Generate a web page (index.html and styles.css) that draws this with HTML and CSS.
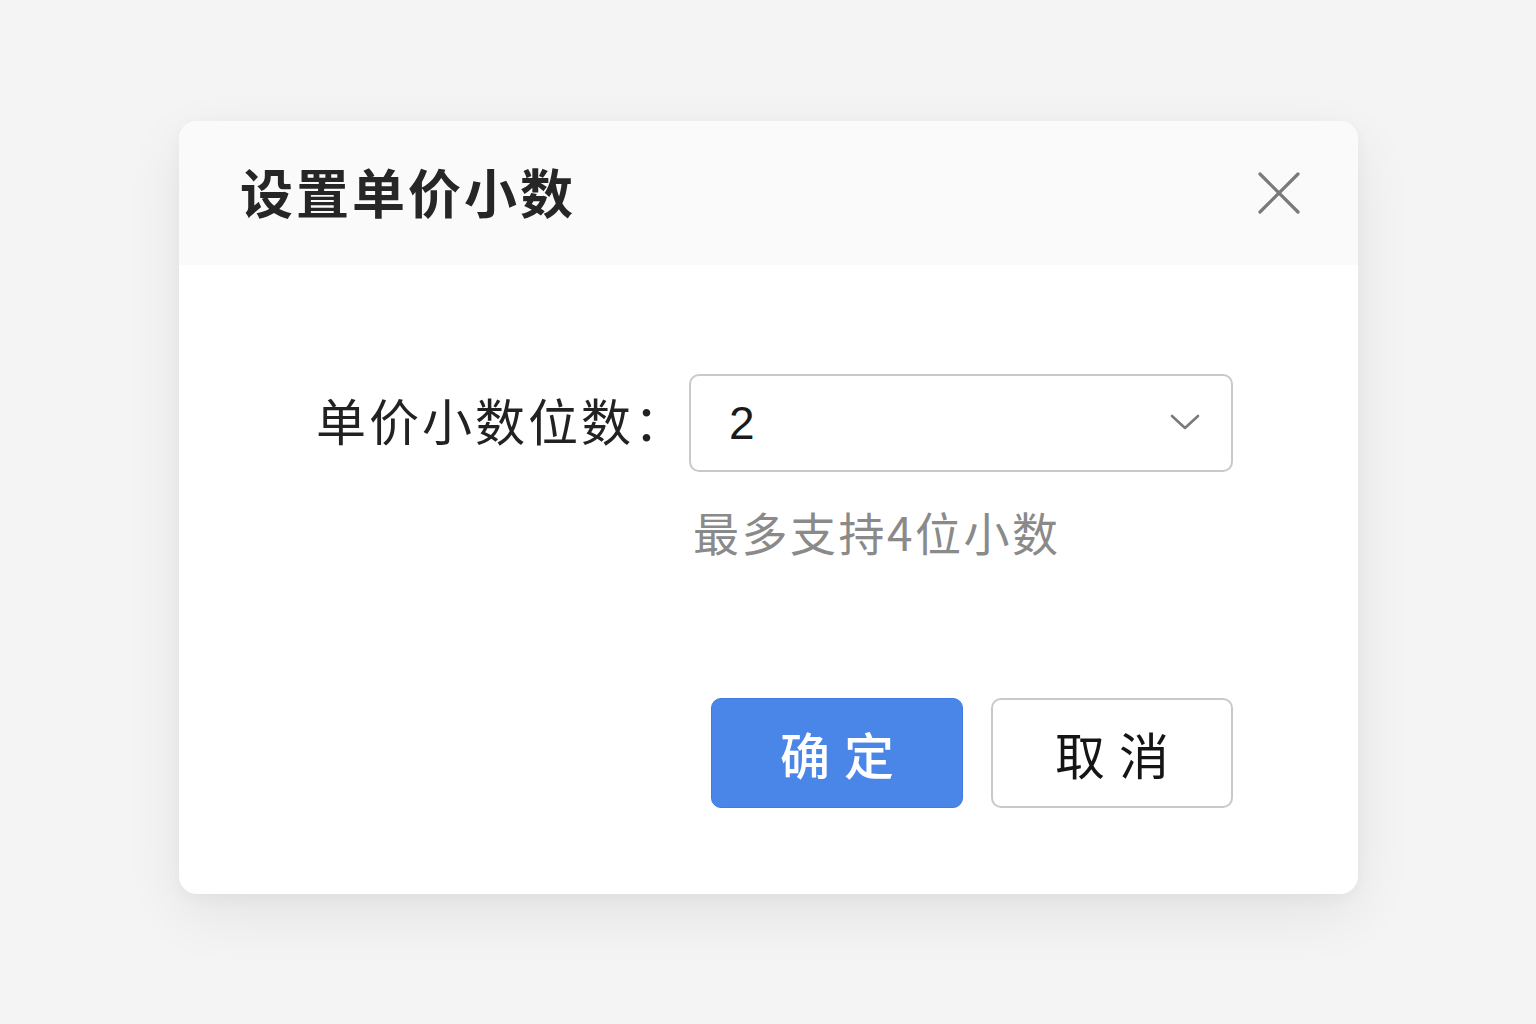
FILE: index.html
```html
<!DOCTYPE html>
<html lang="zh-CN">
<head>
<meta charset="utf-8">
<link rel="stylesheet" href="styles.css">
</head>
<body>
<div class="dialog">
  <div class="dialog-header">
    <h1 class="dialog-title">设置单价小数</h1>
    <button class="close-btn" aria-label="关闭">
      <svg width="42" height="42" viewBox="0 0 42 42"><path d="M2 2 L40 40 M40 2 L2 40" stroke="#7a7a7a" stroke-width="3.2" stroke-linecap="round" fill="none"/></svg>
    </button>
  </div>
  <div class="dialog-body">
    <div class="form-row">
      <label class="form-label">单价小数位数：</label>
      <div class="form-field">
        <div class="select">
          <span class="select-value">2</span>
          <svg class="chevron" width="30" height="18" viewBox="0 0 30 18"><path d="M2 3 L15 15 L28 3" stroke="#7a7a7a" stroke-width="2.6" stroke-linecap="round" stroke-linejoin="round" fill="none"/></svg>
        </div>
        <div class="hint">最多支持4位小数</div>
      </div>
    </div>
    <div class="actions">
      <button class="btn btn-primary">确定</button>
      <button class="btn btn-default">取消</button>
    </div>
  </div>
</div>
</body>
</html>
```

FILE: styles.css
```css
* { box-sizing: border-box; }
html, body { margin: 0; padding: 0; }
body {
  background: #f4f4f4;
  width: 1536px;
  height: 1024px;
  font-family: "Noto Sans CJK SC", "Noto Sans", sans-serif;
  padding: 121px 0 0 179px;
}
.dialog {
  width: 1179px;
  height: 773px;
  background: #ffffff;
  border-radius: 18px;
  box-shadow: 0 20px 60px rgba(0,0,0,0.07), 0 4px 16px rgba(0,0,0,0.04);
  overflow: hidden;
  display: flex;
  flex-direction: column;
}
.dialog-header {
  height: 144px;
  background: #fafafa;
  display: flex;
  align-items: center;
  justify-content: space-between;
  padding: 0 58px 0 61px;
}
.dialog-title {
  margin: 0;
  font-size: 53px;
  font-weight: 700;
  color: #262626;
  letter-spacing: 3px;
  line-height: 1;
  position: relative;
  top: -2px;
}
.close-btn {
  background: none;
  border: none;
  padding: 0;
  width: 42px;
  height: 42px;
  cursor: pointer;
  display: flex;
  position: relative;
  top: 0;
}
.dialog-body {
  flex: 1;
  padding: 109px 125px 86px 137px;
  display: flex;
  flex-direction: column;
}
.form-row {
  display: flex;
  align-items: flex-start;
}
.form-label {
  font-size: 50px;
  color: #222;
  line-height: 91px;
  width: 373px;
  white-space: nowrap;
  letter-spacing: 3px;
}
.form-field {
  flex: 1;
  display: flex;
  flex-direction: column;
}
.select {
  height: 98px;
  border: 2px solid #c9c9c9;
  border-radius: 10px;
  display: flex;
  align-items: center;
  justify-content: space-between;
  padding: 0 31px 0 38px;
}
.select-value {
  font-family: "Liberation Sans", "Noto Sans", sans-serif;
  font-size: 46px;
  color: #1a1a1a;
  line-height: 1;
}
.chevron { margin-top: -2px; }
.hint {
  margin-top: 27px;
  padding-left: 4px;
  font-size: 46px;
  color: #8a8a8a;
  line-height: 64px;
  letter-spacing: 2.5px;
}
.actions {
  margin-top: auto;
  display: flex;
  justify-content: flex-end;
  gap: 28px;
}
.btn {
  height: 110px;
  border-radius: 10px;
  font-family: "Noto Sans CJK SC", sans-serif;
  font-size: 50px;
  letter-spacing: 14px;
  padding: 0 0 0 14px;
  cursor: pointer;
  display: flex;
  align-items: center;
  justify-content: center;
}
.btn-primary {
  width: 252px;
  background: #4a86e8;
  border: 1px solid #3f7be0;
  color: #ffffff;
  font-weight: 500;
}
.btn-default {
  width: 242px;
  background: #ffffff;
  border: 2px solid #c9c9c9;
  color: #151515;
}
```
